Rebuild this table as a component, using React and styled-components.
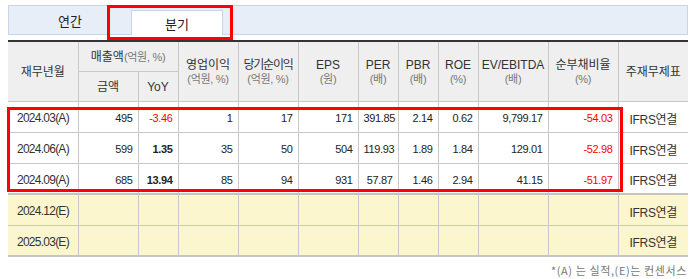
import React from "react";
import styled, { createGlobalStyle } from "styled-components";

const Global = createGlobalStyle`
  html, body { margin: 0; padding: 0; background: #fff; }
  body { font-family: "Liberation Sans", "Noto Sans CJK KR", sans-serif; color: #333; }
`;

const Page = styled.div`
  position: relative;
  width: 680px;
  padding: 5px 0 0 8px;
`;

const TabBar = styled.div`
  display: flex;
  align-items: flex-end;
  height: 28px;
  background: #e8eef8;
  border: 1px solid #c9d4e6;
`;

const Tab = styled.div`
  box-sizing: border-box;
  width: ${(p) => p.$w}px;
  height: ${(p) => (p.$active ? 25 : 28)}px;
  margin-bottom: ${(p) => (p.$active ? -1 : 0)}px;
  display: flex;
  align-items: center;
  justify-content: center;
  font-family: "Noto Sans CJK KR", sans-serif;
  font-size: 13px;
  color: #222;
  background: ${(p) => (p.$active ? "#fff" : "transparent")};
  border: ${(p) => (p.$active ? "1px solid #c9d4e6" : "none")};
  border-bottom: none;
`;

const Table = styled.table`
  margin-top: 5px;
  width: 680px;
  table-layout: fixed;
  border-collapse: collapse;
  border-top: 2px solid #333;
  border-bottom: 2px solid #c4c4c4;
`;

const HeadRow = styled.tr`
  height: 30px;
`;

const Th = styled.th`
  background: #efefef;
  border: 1px solid #c8c8c8;
  border-top: none;
  padding: 2px 0 0;
  white-space: nowrap;
  overflow: visible;
  font-weight: normal;
  font-family: "Liberation Sans", "Noto Sans CJK KR", sans-serif;
  font-size: 12px;
  letter-spacing: ${(p) => (p.$tight ? "-1.2px" : "0")};
  line-height: 14px;
  color: #333;
  text-align: center;
  vertical-align: middle;
  &:first-child { border-left: none; }
  &:last-child { border-right: none; }
`;

const Sub = styled.span`
  display: block;
  font-size: 11px;
  color: #777;
  letter-spacing: -0.3px;
`;

const Unit = styled.span`
  font-size: 11px;
  color: #777;
  letter-spacing: -0.3px;
`;

const Row = styled.tr`
  height: 31px;
  background: ${(p) => (p.$estimate ? "#fcf6cf" : "#fff")};
  &:nth-child(4) td { border-top: 2px solid #c4c4c4; }
`;

const Td = styled.td`
  border: 1px solid #c8c8c8;
  padding: 3px 5px 0;
  white-space: nowrap;
  font-size: 11px;
  letter-spacing: -0.35px;
  text-align: right;
  color: ${(p) => (p.$neg ? "#f00" : "#222")};
  font-weight: ${(p) => (p.$bold ? "bold" : "normal")};
  &:first-child { border-left: none; }
  &:last-child { border-right: none; }
`;

const DateCell = styled(Td)`
  text-align: left;
  padding-left: 9px;
  font-size: 12px;
  letter-spacing: -0.75px;
  color: #333;
`;

const TypeCell = styled(Td)`
  text-align: center;
  padding: 3px 0 0;
  font-family: "Liberation Sans", "Noto Sans CJK KR", sans-serif;
  font-size: 12px;
  letter-spacing: -0.3px;
  color: #333;
`;

const Note = styled.div`
  margin-top: 5px;
  text-align: right;
  font-family: "Noto Sans CJK KR", sans-serif;
  font-size: 11px;
  letter-spacing: 0.6px;
  color: #777;
  padding-right: 1px;
`;

const Highlight = styled.div`
  position: absolute;
  left: ${(p) => p.$x}px;
  top: ${(p) => p.$y}px;
  width: ${(p) => p.$w}px;
  height: ${(p) => p.$h}px;
  box-sizing: border-box;
  border: 3px solid #f00;
  pointer-events: none;
`;

const widths = [70, 60, 40, 60, 60, 60, 40, 40, 40, 70, 70, 70];

const actual = [
  ["2024.03(A)", "495", "-3.46", "1", "17", "171", "391.85", "2.14", "0.62", "9,799.17", "-54.03"],
  ["2024.06(A)", "599", "1.35", "35", "50", "504", "119.93", "1.89", "1.84", "129.01", "-52.98"],
  ["2024.09(A)", "685", "13.94", "85", "94", "931", "57.87", "1.46", "2.94", "41.15", "-51.97"],
];
const estimates = ["2024.12(E)", "2025.03(E)"];

export default function App() {
  return (
    <>
      <Global />
      <Page>
        <TabBar>
          <Tab $w={122}>연간</Tab>
          <Tab $w={92} $active>분기</Tab>
        </TabBar>
        <Table>
          <colgroup>
            {widths.map((w, i) => (
              <col key={i} style={{ width: w }} />
            ))}
          </colgroup>
          <thead>
            <HeadRow>
              <Th rowSpan={2}>재무년월</Th>
              <Th colSpan={2}>
                매출액<Unit>(억원, %)</Unit>
              </Th>
              <Th rowSpan={2}>영업이익<Sub>(억원, %)</Sub></Th>
              <Th rowSpan={2} $tight>당기순이익<Sub>(억원, %)</Sub></Th>
              <Th rowSpan={2}>EPS<Sub>(원)</Sub></Th>
              <Th rowSpan={2}>PER<Sub>(배)</Sub></Th>
              <Th rowSpan={2}>PBR<Sub>(배)</Sub></Th>
              <Th rowSpan={2}>ROE<Sub>(%)</Sub></Th>
              <Th rowSpan={2}>EV/EBITDA<Sub>(배)</Sub></Th>
              <Th rowSpan={2}>순부채비율<Sub>(%)</Sub></Th>
              <Th rowSpan={2}>주재무제표</Th>
            </HeadRow>
            <HeadRow>
              <Th>금액</Th>
              <Th>YoY</Th>
            </HeadRow>
          </thead>
          <tbody>
            {actual.map((r) => (
              <Row key={r[0]}>
                <DateCell>{r[0]}</DateCell>
                <Td>{r[1]}</Td>
                <Td $neg={r[2].startsWith("-")} $bold={!r[2].startsWith("-")}>{r[2]}</Td>
                {r.slice(3, 10).map((v, i) => (
                  <Td key={i}>{v}</Td>
                ))}
                <Td $neg={r[10].startsWith("-")}>{r[10]}</Td>
                <TypeCell>IFRS연결</TypeCell>
              </Row>
            ))}
            {estimates.map((d) => (
              <Row key={d} $estimate>
                <DateCell>{d}</DateCell>
                {Array.from({ length: 10 }).map((_, i) => (
                  <Td key={i} />
                ))}
                <TypeCell>IFRS연결</TypeCell>
              </Row>
            ))}
          </tbody>
        </Table>
        <Note>*(A) 는 실적,(E)는 컨센서스</Note>
        <Highlight $x={107} $y={5} $w={126} $h={35} />
        <Highlight $x={7} $y={107} $w={616} $h={85} />
      </Page>
    </>
  );
}
